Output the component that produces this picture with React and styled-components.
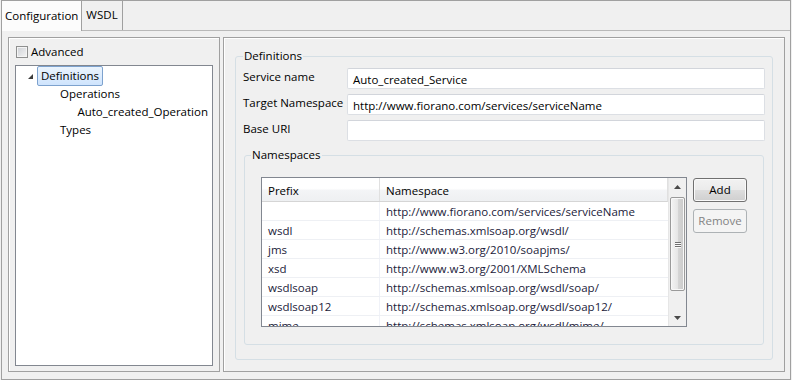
import React from 'react';
import styled, { createGlobalStyle } from 'styled-components';

const GlobalStyle = createGlobalStyle`
  html, body {
    margin: 0;
    padding: 0;
    background: #f0f0f0;
  }
  body {
    font-family: "Open Sans", "Noto Sans", sans-serif;
    font-size: 11.5px;
    color: #000;
  }
  * { box-sizing: border-box; }
`;

const Frame = styled.div`
  margin-left: 1px;
  width: 790px;
  height: 380px;
  border: 1px solid #a0a0a0;
  background: #f0f0f0;
  display: flex;
  flex-direction: column;
`;

const TabStrip = styled.div`
  display: flex;
  height: 30px;
  border-bottom: 1px solid #b9b9b9;
`;

const Tab = styled.div`
  position: relative;
  z-index: ${p => (p.active ? 1 : 0)};
  display: flex;
  align-items: center;
  height: ${p => (p.active ? '30px' : '29px')};
  margin-bottom: ${p => (p.active ? '-1px' : '0')};
  padding: 0 ${p => (p.active ? '3px' : '4px')} 2px;
  background: ${p => (p.active ? '#fcfcfc' : '#f0f0f0')};
  border-right: 1px solid #a0a0a0;
  white-space: nowrap;
`;

const TabPanel = styled.div`
  flex: 1;
  display: flex;
  gap: 3px;
  padding: 6px 5px 7px 6px;
`;

const Panel = styled.div`
  border: 1px solid #a0a0a0;
  box-shadow: inset 1px 1px 0 #fff;
  display: flex;
  flex-direction: column;
`;

const LeftPanel = styled(Panel)`
  width: 212px;
  padding: 0 6px 5px 6px;
`;

const RightPanel = styled(Panel)`
  flex: 1;
  padding: 10px 11px 11px 11px;
`;

const CheckRow = styled.label`
  height: 27px;
  display: flex;
  align-items: center;
  gap: 3px;
  padding-left: 1px;
`;

const CheckBox = styled.span`
  width: 12px;
  height: 12px;
  border: 1px solid #8e8f8f;
  background: linear-gradient(135deg, #cdd0d5, #f4f4f4);
  box-shadow: inset 0 0 0 1px #f4f4f4;
`;

const Tree = styled.div`
  flex: 1;
  background: #fff;
  border: 1px solid #828790;
  padding-top: 1px;
`;

const TreeRow = styled.div`
  height: 18px;
  display: flex;
  align-items: center;
  padding-left: ${p => 12 + p.depth * 19}px;
`;

const Expander = styled.span`
  width: 9px;
  display: flex;
  align-items: center;
`;

const TreeLabel = styled.span`
  height: 20px;
  display: flex;
  align-items: center;
  padding: 0 3px 1px;
  border: 1px solid ${p => (p.selected ? '#7da2ce' : 'transparent')};
  border-radius: 2px;
  background: ${p => (p.selected ? 'linear-gradient(#ebf4fd, #cfe4fd)' : 'transparent')};
  white-space: nowrap;
`;

const Group = styled.fieldset`
  margin: 0;
  border: 1px solid #d5dfe5;
  border-radius: 3px;
  display: flex;
  flex-direction: column;
  min-width: 0;
`;

const DefGroup = styled(Group)`
  flex: 1;
  padding: 4px 7px 14px 7px;
`;

const NsGroup = styled(Group)`
  flex: 1;
  margin: 6px 1px 0 1px;
  padding: 14px 16px 16px 6px;
`;

const Legend = styled.legend`
  padding: 0 1px;
  line-height: 16px;
`;

const Form = styled.div`
  display: flex;
  flex-direction: column;
  gap: 5px;
`;

const FieldRow = styled.div`
  display: flex;
  align-items: flex-start;
`;

const FieldLabel = styled.span`
  width: 104px;
  line-height: 16px;
  padding-top: 1px;
  white-space: nowrap;
`;

const TextBox = styled.div`
  flex: 1;
  height: 21px;
  background: #fff;
  border: 1px solid #dcdfe4;
  border-top-color: #d2d5db;
  border-radius: 2px;
  padding: 2px 5px 0;
  line-height: 17px;
  white-space: nowrap;
`;

const NsBody = styled.div`
  display: flex;
  align-items: flex-start;
  gap: 6px;
  padding-left: 10px;
`;

const Table = styled.div`
  width: 426px;
  height: 150px;
  border: 1px solid #828790;
  background: #fff;
  display: flex;
  overflow: hidden;
`;

const Grid = styled.div`
  flex: 1;
  overflow: hidden;
`;

const Row = styled.div`
  display: grid;
  grid-template-columns: 118px 1fr;
  height: ${p => (p.head ? '24px' : '19px')};
  border-bottom: 1px solid ${p => (p.head ? '#d5d5d5' : '#eef0f4')};
  background: ${p => (p.head ? 'linear-gradient(#ffffff 0%, #ffffff 45%, #f3f4f6 55%, #eef0f2 100%)' : '#fff')};
  color: ${p => (p.head ? '#000' : '#1b1b3a')};
  border-right: ${p => (p.head ? '1px solid #e0e0e0' : 'none')};
`;

const Cell = styled.div`
  display: flex;
  align-items: center;
  padding-left: 6px;
  padding-top: ${p => (p.head ? '2px' : '0')};
  white-space: nowrap;
  overflow: hidden;
  border-right: ${p => (p.first ? `1px solid ${p.head ? '#e0e0e0' : '#f0f2f8'}` : 'none')};
`;

const ScrollBar = styled.div`
  width: 18px;
  display: flex;
  flex-direction: column;
  background: #f0f0f0;
  border-left: 1px solid #e6e6e6;
`;

const ArrowButton = styled.div`
  height: 17px;
  display: flex;
  align-items: center;
  justify-content: center;
`;

const Track = styled.div`
  flex: 1;
  display: flex;
  flex-direction: column;
`;

const Thumb = styled.div`
  height: 94px;
  margin: 2px 1px 0 1px;
  border: 1px solid #9a9a9a;
  border-radius: 2px;
  background: linear-gradient(to right, #f4f4f4, #e6e6e6 50%, #d6d6d6 51%, #cacaca);
  box-shadow: inset 0 0 0 1px #f8f8f8;
  display: flex;
  flex-direction: column;
  align-items: center;
  justify-content: center;
  gap: 1px;
`;

const Grip = styled.span`
  width: 6px;
  height: 1px;
  background: #707070;
  box-shadow: 0 1px 0 #fafafa;
`;

const Buttons = styled.div`
  display: flex;
  flex-direction: column;
  gap: 7px;
  padding-top: 1px;
`;

const Button = styled.div`
  width: 54px;
  height: 24px;
  display: flex;
  align-items: center;
  justify-content: center;
  border-radius: 3px;
  border: 1px solid ${p => (p.disabled ? '#adb2b5' : '#707070')};
  background: ${p =>
    p.disabled
      ? '#f4f4f4'
      : 'linear-gradient(#f2f2f2 0%, #ebebeb 48%, #dddddd 52%, #cfcfcf 100%)'};
  box-shadow: inset 0 0 0 1px ${p => (p.disabled ? '#f4f4f4' : '#fafafa')};
  color: ${p => (p.disabled ? '#838383' : '#000')};
  padding-bottom: 1px;
`;

const namespaces = [
  ['', 'http://www.fiorano.com/services/serviceName'],
  ['wsdl', 'http://schemas.xmlsoap.org/wsdl/'],
  ['jms', 'http://www.w3.org/2010/soapjms/'],
  ['xsd', 'http://www.w3.org/2001/XMLSchema'],
  ['wsdlsoap', 'http://schemas.xmlsoap.org/wsdl/soap/'],
  ['wsdlsoap12', 'http://schemas.xmlsoap.org/wsdl/soap12/'],
  ['mime', 'http://schemas.xmlsoap.org/wsdl/mime/'],
];

const tree = [
  { label: 'Definitions', depth: 0, open: true, selected: true },
  { label: 'Operations', depth: 1 },
  { label: 'Auto_created_Operation', depth: 2 },
  { label: 'Types', depth: 1 },
];

const Triangle = ({ up }) => (
  <svg width="7" height="4" viewBox="0 0 7 4">
    <polygon points={up ? '3.5,0 7,4 0,4' : '0,0 7,0 3.5,4'} fill="#4a4a4a" />
  </svg>
);

const App = () => (
  <>
    <GlobalStyle />
    <Frame>
      <TabStrip>
        <Tab active>Configuration</Tab>
        <Tab>WSDL</Tab>
      </TabStrip>
      <TabPanel>
        <LeftPanel>
          <CheckRow>
            <CheckBox />
            Advanced
          </CheckRow>
          <Tree>
            {tree.map(n => (
              <TreeRow key={n.label} depth={n.depth}>
                <Expander>
                  {n.open && (
                    <svg width="5" height="5" viewBox="0 0 5 5">
                      <polygon points="5,0 5,5 0,5" fill="#3c3c3c" />
                    </svg>
                  )}
                </Expander>
                <TreeLabel selected={n.selected}>{n.label}</TreeLabel>
              </TreeRow>
            ))}
          </Tree>
        </LeftPanel>
        <RightPanel>
          <DefGroup>
            <Legend>Definitions</Legend>
            <Form>
              <FieldRow>
                <FieldLabel>Service name</FieldLabel>
                <TextBox>Auto_created_Service</TextBox>
              </FieldRow>
              <FieldRow>
                <FieldLabel>Target Namespace</FieldLabel>
                <TextBox>http://www.fiorano.com/services/serviceName</TextBox>
              </FieldRow>
              <FieldRow>
                <FieldLabel>Base URI</FieldLabel>
                <TextBox />
              </FieldRow>
            </Form>
            <NsGroup>
              <Legend>Namespaces</Legend>
              <NsBody>
                <Table>
                  <Grid>
                    <Row head>
                      <Cell head first>Prefix</Cell>
                      <Cell head>Namespace</Cell>
                    </Row>
                    {namespaces.map(([prefix, uri]) => (
                      <Row key={uri}>
                        <Cell first>{prefix}</Cell>
                        <Cell>{uri}</Cell>
                      </Row>
                    ))}
                  </Grid>
                  <ScrollBar>
                    <ArrowButton><Triangle up /></ArrowButton>
                    <Track>
                      <Thumb>
                        <Grip />
                        <Grip />
                        <Grip />
                      </Thumb>
                    </Track>
                    <ArrowButton><Triangle /></ArrowButton>
                  </ScrollBar>
                </Table>
                <Buttons>
                  <Button>Add</Button>
                  <Button disabled>Remove</Button>
                </Buttons>
              </NsBody>
            </NsGroup>
          </DefGroup>
        </RightPanel>
      </TabPanel>
    </Frame>
  </>
);

export default App;
